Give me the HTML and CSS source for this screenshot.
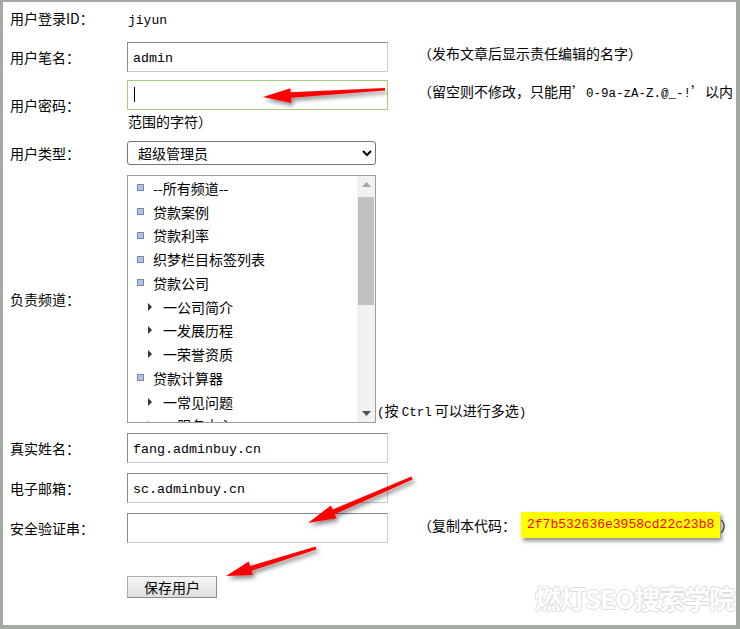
FILE: index.html
```html
<!DOCTYPE html>
<html lang="zh-CN">

<head>
    <meta charset="UTF-8">
    <title>用户编辑</title>
    <link rel="stylesheet" href="styles.css">
</head>

<body>
    <div class="frame">
        <div class="form">
            <div class="row r-id">
                <div class="label">用户登录ID：</div>
                <div class="value"><span class="en login">jiyun</span></div>
            </div>

            <div class="row r-pen">
                <div class="label">用户笔名：</div>
                <div class="value line">
                    <input type="text" class="txt" value="admin">
                    <span class="note">（发布文章后显示责任编辑的名字）</span>
                </div>
            </div>

            <div class="row r-pwd">
                <div class="label">用户密码：</div>
                <div class="value">
                    <div class="line">
                        <input type="password" class="txt pwd">
                        <span class="note">（留空则不修改，只能用’<span class="en">0-9a-zA-Z.@_-!</span>’以内</span>
                    </div>
                    <div class="wrap-line">范围的字符）</div>
                </div>
            </div>

            <div class="row r-type">
                <div class="label">用户类型：</div>
                <div class="value">
                    <select class="sel">
                        <option>超级管理员</option>
                        <option>频道管理员</option>
                        <option>信息发布员</option>
                    </select>
                </div>
            </div>

            <div class="row r-chan">
                <div class="label">负责频道：</div>
                <div class="value line bottom">
                    <div class="listbox">
                        <div class="opts">
                            <div class="opt"><i class="dot"></i>--所有频道--</div>
                            <div class="opt"><i class="dot"></i>贷款案例</div>
                            <div class="opt"><i class="dot"></i>贷款利率</div>
                            <div class="opt"><i class="dot"></i>织梦栏目标签列表</div>
                            <div class="opt"><i class="dot"></i>贷款公司</div>
                            <div class="opt sub"><i class="tri"></i>一公司简介</div>
                            <div class="opt sub"><i class="tri"></i>一发展历程</div>
                            <div class="opt sub"><i class="tri"></i>一荣誉资质</div>
                            <div class="opt"><i class="dot"></i>贷款计算器</div>
                            <div class="opt sub"><i class="tri"></i>一常见问题</div>
                            <div class="opt sub"><i class="tri"></i>一服务中心</div>
                        </div>
                        <div class="sbar">
                            <div class="sb-btn">
                                <svg width="9" height="5" viewBox="0 0 9 5"><path d="M0 5 L4.5 0 L9 5 Z" fill="#a3a3a3"/></svg>
                            </div>
                            <div class="sb-thumb"></div>
                            <div class="sb-track"></div>
                            <div class="sb-btn">
                                <svg width="9" height="5" viewBox="0 0 9 5"><path d="M0 0 L9 0 L4.5 5 Z" fill="#505050"/></svg>
                            </div>
                        </div>
                    </div>
                    <span class="hint"><span class="en">(</span>按 <span class="en">Ctrl</span> 可以进行多选<span class="en">)</span></span>
                </div>
            </div>

            <div class="row r-name">
                <div class="label">真实姓名：</div>
                <div class="value"><input type="text" class="txt" value="fang.adminbuy.cn"></div>
            </div>

            <div class="row r-mail">
                <div class="label">电子邮箱：</div>
                <div class="value"><input type="text" class="txt" value="sc.adminbuy.cn"></div>
            </div>

            <div class="row r-code">
                <div class="label">安全验证串：</div>
                <div class="value line">
                    <input type="text" class="txt">
                    <span class="note code-note">（复制本代码：<span class="code">2f7b532636e3958cd22c23b8</span>）</span>
                </div>
            </div>

            <div class="row r-save">
                <div class="label"></div>
                <div class="value"><button type="submit" class="save-btn">保存用户</button></div>
            </div>
        </div>

        <!-- 标注箭头 -->
        <svg class="marks" width="740" height="629" viewBox="0 0 740 629">
            <defs>
                <filter id="shadow" x="-20%" y="-50%" width="140%" height="200%">
                    <feDropShadow dx="2" dy="3" stdDeviation="2" flood-color="#000" flood-opacity="0.45"/>
                </filter>
            </defs>
            <g fill="#ff0000" filter="url(#shadow)">
                <polygon points="384.9,88 290.7,92.2 290.4,88.2 263,97 291.4,103 291.1,97.7 385.1,90.6"/>
                <polygon points="411.4,476.4 332.7,509.6 330.9,505.5 308,523 336.5,518.3 334.7,514.2 412.6,479.6"/>
                <polygon points="315.6,546.4 250.1,565.9 248.7,561.6 226,576 252.9,575 251.5,570.7 316.4,549.6"/>
            </g>
        </svg>

        <div class="watermark">燃灯SEO搜索学院</div>
    </div>
</body>

</html>
```

FILE: styles.css
```css
* {
    margin: 0;
    padding: 0;
    box-sizing: border-box;
}

body {
    font-family: "Noto Sans CJK SC", "Liberation Sans", sans-serif;
    font-size: 14px;
    color: #000;
    background: #fff;
}

.frame {
    position: relative;
    width: 740px;
    height: 629px;
    border-style: solid;
    border-color: #a3a9a3;
    border-width: 2px 4px 4px 3px;
    background: #fff;
    overflow: hidden;
}

.form {
    display: flex;
    flex-direction: column;
    padding-left: 7px;
}

.row {
    display: flex;
    align-items: center;
}

.label {
    width: 117px;
    flex: none;
    line-height: 20px;
}

.value {
    flex: 1;
}

.line {
    display: flex;
    align-items: flex-start;
}

.line.bottom {
    align-items: flex-end;
}

.en {
    font-family: "Liberation Mono", monospace;
    font-size: 12.5px;
}

.login {
    padding-left: 1px;
    font-size: 13px;
}

.r-id {
    height: 32px;
}

.r-pen {
    padding: 8px 0 4px;
}

.r-pwd {
    padding: 4px 0;
}

.r-type {
    padding: 7px 0 6px;
}

.r-chan {
    padding: 4px 0;
}

.r-name {
    padding: 6px 0;
}

.r-mail,
.r-code {
    padding: 4px 0 6px;
}

.r-save {
    padding-top: 27px;
}

.txt {
    width: 261px;
    height: 30px;
    flex: none;
    border: 1px solid;
    border-color: #8a8a8a #cbcbcb #cbcbcb #8a8a8a;
    padding: 2px 5px 0;
    font-family: "Liberation Mono", monospace;
    font-size: 13.33px;
    color: #000;
    outline: none;
}

.txt.pwd {
    border-color: #a3cf78;
    /* 光标 */
    background: linear-gradient(#000, #000) no-repeat 6px 6px / 1px 15px;
}

.note {
    margin-left: 30px;
    line-height: 23px;
    white-space: nowrap;
}

.wrap-line {
    margin-top: 2px;
    padding-left: 1px;
    line-height: 18px;
}

.sel {
    width: 249px;
    height: 24px;
    border: 1px solid #767676;
    border-radius: 3px;
    padding-left: 6px;
    font-family: "Noto Sans CJK SC", sans-serif;
    font-size: 14px;
    color: #000;
    background: #fff;
}

.listbox {
    display: flex;
    width: 249px;
    height: 248px;
    flex: none;
    border: 1px solid #9c9c9c;
    background: #fff;
}

.opts {
    flex: 1;
    overflow: hidden;
    padding-left: 9px;
}

.opt {
    display: flex;
    align-items: center;
    height: 23.75px;
    white-space: nowrap;
}

.dot {
    width: 7px;
    height: 7px;
    margin-right: 9px;
    border: 1px solid #7d8796;
    background: #a9c3ee;
}

.tri {
    width: 0;
    height: 0;
    margin: 0 11px 0 11px;
    border-left: 4px solid #333;
    border-top: 4px solid transparent;
    border-bottom: 4px solid transparent;
}

.sbar {
    display: flex;
    flex-direction: column;
    width: 18px;
    flex: none;
    background: #f1f1f1;
}

.sb-btn {
    height: 17px;
    display: flex;
    align-items: center;
    justify-content: center;
}

.sb-thumb {
    height: 108px;
    margin: 4px 1px 0;
    background: #c1c1c1;
}

.sb-track {
    flex: 1;
}

.hint {
    margin-left: 1px;
    line-height: 20px;
    white-space: nowrap;
}

.code-note {
    display: flex;
    align-items: center;
    line-height: 26px;
    margin-top: -1px;
}

.code {
    margin-left: 5px;
    padding: 0 6px;
    height: 26px;
    line-height: 26px;
    background: #ffff00;
    color: #ff0000;
    font-family: "Liberation Mono", monospace;
    font-size: 13px;
    box-shadow: 2px 3px 4px rgba(0, 0, 0, 0.45);
}

.save-btn {
    width: 90px;
    height: 22px;
    border: 1px solid #adadad;
    border-right-color: #8c8c8c;
    border-bottom-color: #8c8c8c;
    background: linear-gradient(#f6f6f6, #dedede);
    font-family: "Noto Sans CJK SC", sans-serif;
    font-size: 14px;
    color: #000;
}

.marks {
    position: absolute;
    top: -2px;
    left: -3px;
    pointer-events: none;
}

.watermark {
    position: absolute;
    right: 2px;
    bottom: 9px;
    font-family: "Noto Sans CJK SC", sans-serif;
    font-size: 26px;
    font-weight: bold;
    letter-spacing: -1px;
    color: #fff;
    text-shadow: 1px 0 #dcdcdc, -1px 0 #dcdcdc, 0 1px #dcdcdc, 0 -1px #dcdcdc;
}
```
